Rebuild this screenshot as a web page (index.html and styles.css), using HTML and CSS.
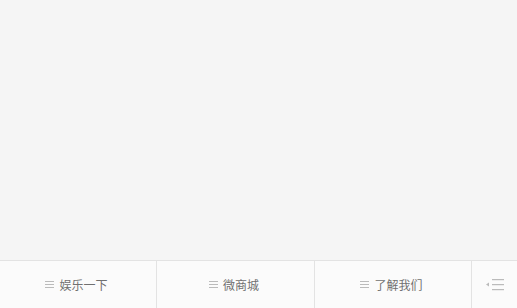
FILE: index.html
```html
<!DOCTYPE html>
<html>
<head>
<meta charset="utf-8">
<link rel="stylesheet" href="styles.css">
</head>
<body>
<div class="page">
  <div class="content"></div>
  <nav class="tabbar">
    <div class="tab t1"><span class="lines"><i></i><i></i><i></i></span><span class="label">娱乐一下</span></div>
    <div class="tab t2"><span class="lines"><i></i><i></i><i></i></span><span class="label">微商城</span></div>
    <div class="tab t3"><span class="lines"><i></i><i></i><i></i></span><span class="label">了解我们</span></div>
    <div class="toggle">
      <svg width="20" height="12" viewBox="0 0 20 12">
        <polygon points="0,5.5 3,3.5 3,7.5" fill="#bbb"/>
        <rect x="6" y="0" width="12" height="1.2" fill="#bbb"/>
        <rect x="6" y="5" width="12" height="1.2" fill="#bbb"/>
        <rect x="6" y="10" width="12" height="1.2" fill="#bbb"/>
      </svg>
    </div>
  </nav>
</div>
</body>
</html>
```
FILE: styles.css
```css
html, body {
  margin: 0;
  padding: 0;
  height: 100%;
}
body {
  background: #f5f5f5;
  font-family: "Noto Sans CJK SC", "Liberation Sans", sans-serif;
}
.page {
  display: flex;
  flex-direction: column;
  height: 308px;
}
.content {
  flex: 1;
}
.tabbar {
  height: 47px;
  border-top: 1px solid #e3e3e3;
  background: #fbfbfb;
  display: flex;
}
.tab {
  box-sizing: border-box;
  border-right: 1px solid #e3e3e3;
  display: flex;
  align-items: center;
  justify-content: center;
  gap: 5px;
  padding-right: 3px;
}
.t1 { width: 157px; }
.t2 { width: 158px; }
.t3 { width: 157px; }
.lines {
  display: flex;
  flex-direction: column;
  gap: 2px;
  width: 9px;
}
.lines i {
  display: block;
  height: 1px;
  background: #bbb;
}
.label {
  font-size: 12px;
  color: #707070;
  line-height: 16px;
}
.toggle {
  flex: 1;
  display: flex;
  align-items: center;
  justify-content: center;
  padding-left: 2px;
}
.toggle svg {
  display: block;
}
```
